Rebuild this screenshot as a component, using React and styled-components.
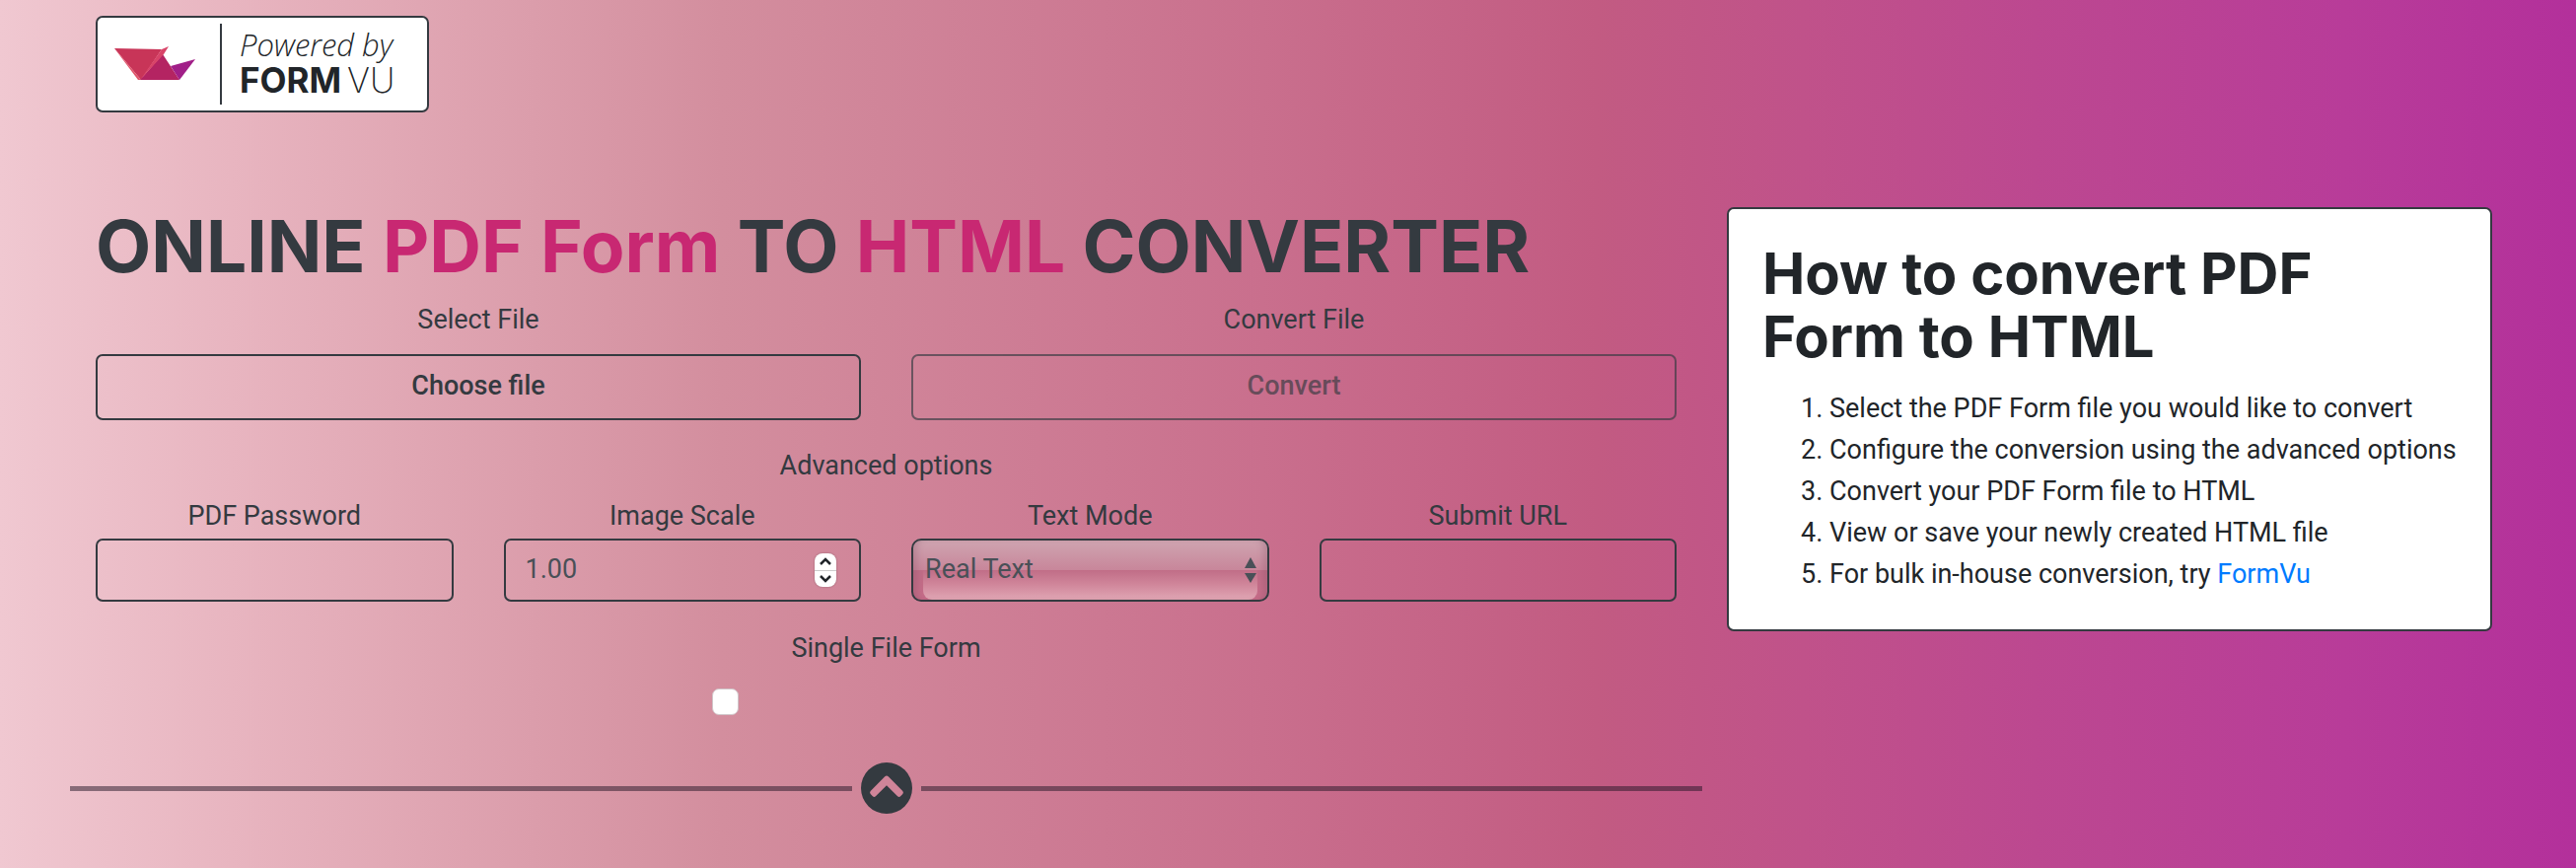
import { useState } from 'react'
import styled, { createGlobalStyle } from 'styled-components'

const STEPS = [
  'Select the PDF Form file you would like to convert',
  'Configure the conversion using the advanced options',
  'Convert your PDF Form file to HTML',
  'View or save your newly created HTML file',
]

const App = () => {
  const [scale, setScale] = useState('1.00')
  const step = (by) => setScale((Number(scale) + by).toFixed(2))

  return (
    <>
      <GlobalStyle />
      <Page>
        <LogoLink href="#formvu" aria-label="Powered by FormVu">
          <Bird viewBox="0 0 82 36" aria-hidden="true">
            <path d="M0 2 48 3 27 34z" fill="#c83558" />
            <path d="M0 2 27 34 24 34z" fill="#e0546a" />
            <path d="M49 8 66 34H26z" fill="#b42462" />
            <path d="M48 3 55 0 50 8 26 34z" fill="#d84468" />
            <path d="M57 20 82 13 66 34z" fill="#a11f88" />
          </Bird>
          <LogoText>
            <Powered>Powered by</Powered>
            <Brand>
              <b>FORM</b>
              <span>VU</span>
            </Brand>
          </LogoText>
        </LogoLink>

        <Columns>
          <Converter onSubmit={(e) => e.preventDefault()}>
            <Title>
              ONLINE <em>PDF Form</em> TO <em>HTML</em> CONVERTER
            </Title>

            <FieldRow $columns={2}>
              <Field $gap="15px">
                <Label htmlFor="choose">Select File</Label>
                <ActionButton id="choose" type="button">
                  Choose file
                </ActionButton>
              </Field>
              <Field $gap="15px">
                <Label htmlFor="convert">Convert File</Label>
                <ActionButton id="convert" type="submit" disabled>
                  Convert
                </ActionButton>
              </Field>
            </FieldRow>

            <OptionsTitle>Advanced options</OptionsTitle>

            <FieldRow $columns={4}>
              <Field $gap="3px">
                <Label htmlFor="password">PDF Password</Label>
                <Input id="password" type="password" />
              </Field>
              <Field $gap="3px">
                <Label htmlFor="scale">Image Scale</Label>
                <Control>
                  <Input
                    id="scale"
                    type="number"
                    step="0.01"
                    value={scale}
                    onChange={(e) => setScale(e.target.value)}
                  />
                  <Spinner>
                    <SpinButton
                      type="button"
                      aria-label="Increase"
                      onClick={() => step(0.01)}
                    >
                      <svg viewBox="0 0 12 8">
                        <path d="M1 7 6 2l5 5" />
                      </svg>
                    </SpinButton>
                    <SpinButton
                      type="button"
                      aria-label="Decrease"
                      onClick={() => step(-0.01)}
                    >
                      <svg viewBox="0 0 12 8">
                        <path d="m1 1 5 5 5-5" />
                      </svg>
                    </SpinButton>
                  </Spinner>
                </Control>
              </Field>
              <Field $gap="3px">
                <Label htmlFor="mode">Text Mode</Label>
                <GlossyControl>
                  <Select id="mode" defaultValue="real">
                    <option value="real">Real Text</option>
                  </Select>
                  <SelectArrows viewBox="0 0 12 26" aria-hidden="true">
                    <path d="M6 0 12 11H0zM6 26 0 16h12z" />
                  </SelectArrows>
                </GlossyControl>
              </Field>
              <Field $gap="3px">
                <Label htmlFor="submit-url">Submit URL</Label>
                <Input id="submit-url" type="url" />
              </Field>
            </FieldRow>

            <SingleFile>
              <Label htmlFor="single">Single File Form</Label>
              <Checkbox id="single" type="checkbox" />
            </SingleFile>

            <Divider>
              <Line />
              <CollapseButton type="button" aria-label="Hide options">
                <svg viewBox="0 0 52 52">
                  <path
                    fillRule="evenodd"
                    d="M26 0a26 26 0 1 1 0 52 26 26 0 0 1 0-52zm-2 14.500L9.700 29q-1.300 1.500 0 3l2.200 2.300q1.500 1.400 3 0L26 23.200l11.100 11.100q1.500 1.400 3 0l2.200-2.300q1.300-1.500 0-3L28 14.500q-2-1.800-4 0z"
                  />
                </svg>
              </CollapseButton>
              <Line />
            </Divider>
          </Converter>

          <Card>
            <CardTitle>How to convert PDF Form to HTML</CardTitle>
            <Steps>
              {STEPS.map((text) => (
                <li key={text}>{text}</li>
              ))}
              <li>
                For bulk in-house conversion, try <a href="#formvu">FormVu</a>
              </li>
            </Steps>
          </Card>
        </Columns>
      </Page>
    </>
  )
}

export default App

const GlobalStyle = createGlobalStyle`
  *,
  *::before,
  *::after {
    box-sizing: border-box;
  }

  body {
    margin: 0;
    color: #343a40;
    font: 400 27px/42px Roboto, sans-serif;
  }

  button,
  input,
  select {
    font: inherit;
    color: inherit;
  }
`

const Page = styled.main`
  min-height: 100vh;
  padding: 16px 85px 55px 97px;
  background: linear-gradient(
    90deg,
    #f0c8d1 0%,
    #e8b5c0 9%,
    #d38e9e 28%,
    #c96f8d 49%,
    #c25b82 62%,
    #c0528a 70%,
    #bc4890 79%,
    #b83c99 91%,
    #b3309b 100%
  );
`

const LogoLink = styled.a`
  display: flex;
  align-items: center;
  width: 338px;
  height: 98px;
  padding: 6px 17px;
  border: 2px solid #343a40;
  border-radius: 7px;
  background: #fff;
  color: #212529;
  text-decoration: none;
`

const Bird = styled.svg`
  width: 82px;
  height: 36px;
  margin-right: 25px;
`

const LogoText = styled.span`
  display: flex;
  flex-direction: column;
  align-self: stretch;
  justify-content: center;
  padding: 0 0 4px 18px;
  border-left: 2px solid #343a40;
`

const Powered = styled.span`
  font: italic 300 31px/36px 'Open Sans', sans-serif;
`

const Brand = styled.span`
  display: flex;
  gap: 6px;
  font: 200 35px/36px Inter, sans-serif;

  b {
    font-weight: 700;
  }
`

const Columns = styled.div`
  display: grid;
  grid-template-columns: repeat(3, minmax(0, 1fr));
  gap: 51px;
  align-items: start;
  margin-top: 96px;

  @media (max-width: 1400px) {
    grid-template-columns: minmax(0, 1fr);
  }
`

const Converter = styled.form`
  grid-column: span 2;

  @media (max-width: 1400px) {
    grid-column: auto;
  }
`

const Title = styled.h1`
  margin: 0 0 12px;
  font: 700 73px/80px Inter, sans-serif;

  em {
    color: #c82872;
    font-style: normal;
  }
`

const FieldRow = styled.div`
  display: grid;
  grid-template-columns: repeat(${({ $columns }) => $columns}, minmax(0, 1fr));
  gap: 51px;
`

const Field = styled.div`
  display: flex;
  flex-direction: column;
  gap: ${({ $gap }) => $gap};
`

const Label = styled.label`
  padding-top: 2px;
  line-height: 40px;
  text-align: center;
`

const ActionButton = styled.button`
  height: 67px;
  padding: 0 20px 4px;
  border: 2px solid #343a40;
  border-radius: 7px;
  background: transparent;
  font-weight: 500;
  cursor: pointer;

  &:disabled {
    opacity: 0.65;
    cursor: default;
  }
`

const OptionsTitle = styled.p`
  margin: 24px 0 9px;
  padding-top: 2px;
  line-height: 40px;
  text-align: center;
`

const Control = styled.div`
  position: relative;
`

const Input = styled.input`
  display: block;
  width: 100%;
  height: 64px;
  padding: 0 20px 3px;
  border: 2px solid #343a40;
  border-radius: 7px;
  background: transparent;
  color: #495057;

  &[type='number'] {
    appearance: textfield;
  }
`

const Spinner = styled.span`
  position: absolute;
  top: 15px;
  right: 25px;
  display: flex;
  flex-direction: column;
  width: 22px;
  height: 34px;
  border-radius: 8px;
  background: #fff;
  box-shadow: 0 0 2px rgba(0, 0, 0, 0.3);
`

const SpinButton = styled.button`
  display: flex;
  flex: 1;
  align-items: center;
  justify-content: center;
  padding: 0;
  border: 0;
  background: none;

  & + & {
    border-top: 1px solid #ccc;
  }

  svg {
    width: 12px;
    height: 8px;
    fill: none;
    stroke: #212529;
    stroke-width: 2.5;
  }
`

// glossy bezel: light upper half, rounded reflection in the lower half
const GlossyControl = styled(Control)`
  border-radius: 10px;
  background: linear-gradient(#cfa6b2, #c8869a 50%, #bf6d87 50%, #c76c89);

  &::before {
    content: '';
    position: absolute;
    inset: 32px 12px 2px;
    border-radius: 0 0 9px 9px;
    background: linear-gradient(#c06d87, #cf8499 45%, #e0a6b4);
  }
`

const Select = styled.select`
  position: relative;
  display: block;
  width: 100%;
  height: 64px;
  padding: 0 12px 3px;
  appearance: none;
  border: 2px solid #343a40;
  border-radius: 10px;
  background: transparent;
  box-shadow:
    inset 8px 0 6px -4px rgba(120, 70, 90, 0.25),
    inset -8px 0 6px -4px rgba(120, 70, 90, 0.25);
  color: #495057;
`

const SelectArrows = styled.svg`
  position: absolute;
  top: 19px;
  right: 13px;
  width: 12px;
  height: 26px;
  fill: #495057;
  pointer-events: none;
`

const SingleFile = styled.div`
  display: grid;
  grid-template-columns: 39% 1fr;
  row-gap: 21px;
  margin-top: 25px;

  ${Label} {
    grid-column: 1 / -1;
  }
`

const Checkbox = styled.input`
  grid-column: 2;
  appearance: none;
  width: 27px;
  height: 27px;
  margin: 0;
  border: 1px solid #d0c4c8;
  border-radius: 7px;
  background: #fff;

  &:checked {
    background: #007bff;
  }
`

const Divider = styled.div`
  display: flex;
  align-items: center;
  gap: 9px;
  margin: 48px -26px 0;
`

const Line = styled.hr`
  flex: 1;
  height: 5px;
  margin: 0;
  border: 0;
  background: rgba(33, 20, 35, 0.5);
`

const CollapseButton = styled.button`
  display: flex;
  padding: 0;
  border: 0;
  background: none;
  cursor: pointer;

  svg {
    width: 52px;
    height: 52px;
    fill: #343a40;
  }
`

const Card = styled.section`
  padding: 33px 34px 35px;
  border: 2px solid #343a40;
  border-radius: 7px;
  background: #fff;
  color: #212529;
`

const CardTitle = styled.h2`
  margin: 0 0 20px;
  font: 700 58px/64px Inter, sans-serif;
`

const Steps = styled.ol`
  margin: 0;
  padding-left: 68px;

  a {
    color: #007bff;
    text-decoration: none;
  }
`
